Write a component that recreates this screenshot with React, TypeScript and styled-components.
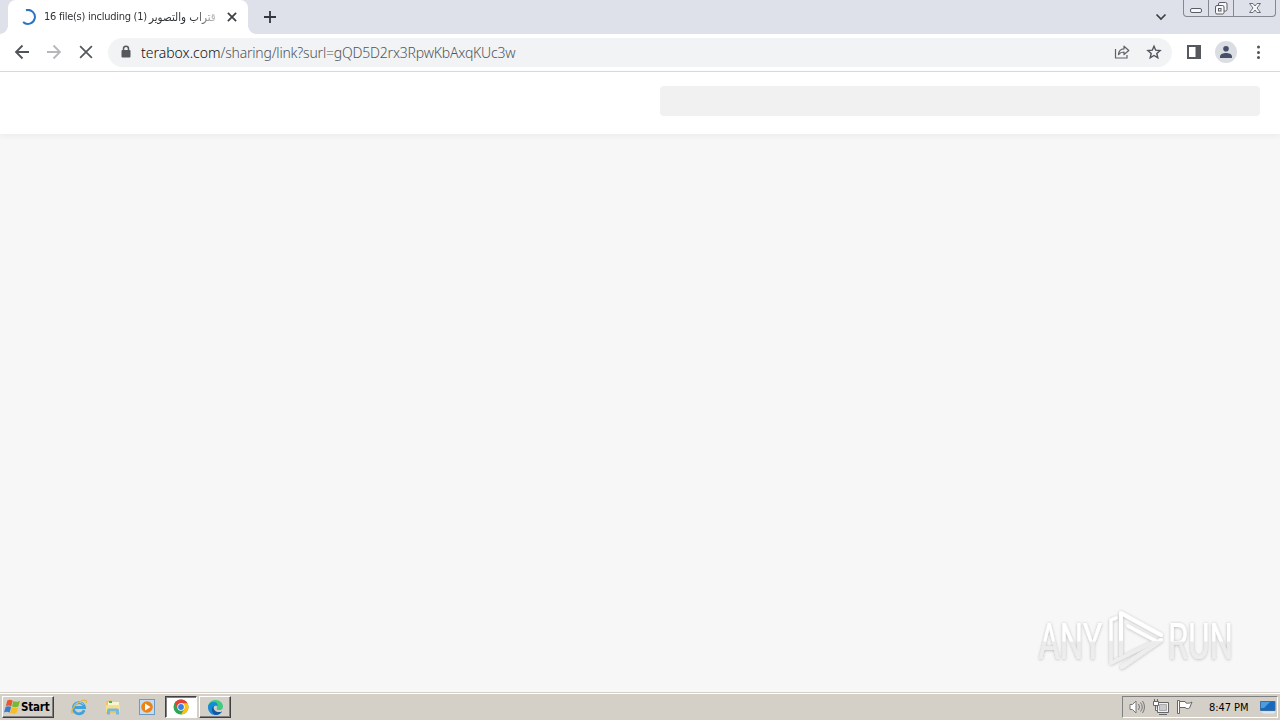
import styled, { createGlobalStyle } from "styled-components";

const GlobalStyle = createGlobalStyle`
  * {
    box-sizing: border-box;
  }
  body {
    margin: 0;
    overflow: hidden;
    background: #f7f7f7;
  }
  svg {
    display: block;
    flex: none;
  }
`;

const Screen = styled.div`
  display: flex;
  flex-direction: column;
  width: 1280px;
  height: 720px;
  font-family: "DejaVu Sans Condensed", "DejaVu Sans", sans-serif;
  color: #202124;
`;
const TabStrip = styled.div`
  display: flex;
  flex: none;
  height: 34px;
  padding-left: 8px;
  background: #dee1e9;
`;
const Tab = styled.div`
  position: relative;
  display: flex;
  align-items: center;
  width: 240px;
  padding: 0 8px 0 12px;
  background: white;
  border-radius: 8px 8px 0 0;
  &::before,
  &::after {
    content: "";
    position: absolute;
    bottom: 0;
    width: 8px;
    height: 8px;
  }
  &::before {
    left: -8px;
    background: radial-gradient(circle at 0 0, transparent 7.5px, white 8px);
  }
  &::after {
    right: -8px;
    background: radial-gradient(circle at 100% 0, transparent 7.5px, white 8px);
  }
`;
const TabTitle = styled.div`
  display: flex;
  width: 175px;
  margin: 0 6px 0 8px;
  overflow: hidden;
  white-space: pre;
  font-size: 11px;
  line-height: 18px;
  color: #303337;
  mask-image: linear-gradient(to right, black 150px, transparent 180px);
`;
const TitleText = styled.span`
  width: 105px;
  letter-spacing: -0.26px;
`;
const TitleArabic = styled.span`
  font-size: 11.5px;
`;
const StripSpacer = styled.div`
  flex: 1;
`;
const StripIcon = styled.div<{ $left: number; $right: number }>`
  padding: 9px ${(p) => p.$right}px 0 ${(p) => p.$left}px;
`;
const WindowButtons = styled.div`
  display: flex;
  width: 93px;
  height: 17px;
  margin-right: 4px;
  border: 1px solid #85888f;
  border-top: none;
  border-radius: 0 0 4px 4px;
`;
const WindowButton = styled.div<{ $width: number }>`
  display: flex;
  justify-content: center;
  width: ${(p) => p.$width}px;
  & + & {
    border-left: 1px solid #85888f;
  }
`;
const Toolbar = styled.div`
  display: flex;
  flex: none;
  align-items: center;
  height: 38px;
  padding: 0 12px 1px 12px;
  background: white;
  border-bottom: 1px solid #dadbdd;
`;
const NavButtons = styled.div`
  display: flex;
  gap: 12px;
  width: 96px;
`;
const AddressBar = styled.div`
  display: flex;
  align-items: center;
  width: 1064px;
  height: 29px;
  padding: 0 10px 0 12px;
  background: #f1f3f4;
  border-radius: 15px;
`;
const Url = styled.div`
  flex: 1;
  margin-left: 9px;
  padding-top: 1px;
  font-family: "Noto Sans", "Open Sans", sans-serif;
  font-size: 14px;
  font-weight: 300;
  line-height: 20px;
  letter-spacing: -0.2px;
  color: #50555a;
`;
const Domain = styled.span`
  color: #101114;
  letter-spacing: 0;
`;
const AddressIcons = styled.div`
  display: flex;
  gap: 16px;
`;
const ToolbarIcons = styled.div`
  display: flex;
  align-items: center;
  margin-left: 14px;
`;
const Avatar = styled.div`
  display: flex;
  align-items: center;
  justify-content: center;
  width: 22px;
  height: 22px;
  margin: 0 14px 0 13px;
  border-radius: 50%;
  background: #dadde2;
`;
const PageHeader = styled.header`
  display: flex;
  flex: none;
  justify-content: flex-end;
  height: 62px;
  padding: 14px 20px 0 0;
  background: white;
  box-shadow: 0 2px 6px rgba(0, 0, 0, 0.05);
  z-index: 1;
`;
const HeaderPlaceholder = styled.div`
  width: 600px;
  height: 30px;
  background: #f1f1f1;
  border-radius: 4px;
`;
const PageBody = styled.main`
  display: flex;
  flex: 1;
  align-items: flex-end;
  justify-content: flex-end;
  padding: 0 40px 16px 0;
  background: #f7f7f7;
`;
const Taskbar = styled.footer`
  display: flex;
  flex: none;
  align-items: center;
  height: 28px;
  padding: 1px 2px 0 2px;
  background: #d4d0c8;
  border-top: 1px solid #d4d0c8;
  box-shadow: inset 0 1px 0 white;
`;
const StartButton = styled.div`
  display: flex;
  align-items: center;
  width: 52px;
  height: 22px;
  padding-left: 1px;
  border: 1px solid;
  border-color: white #404040 #404040 white;
  box-shadow: inset -1px -1px 0 #808080;
  font-size: 11.5px;
  font-weight: bold;
  letter-spacing: -0.2px;
  color: black;
`;
const Launchers = styled.div`
  display: flex;
  gap: 16px;
  margin: 0 9px 0 16px;
`;
const TaskButton = styled.div<{ $active?: boolean }>`
  display: flex;
  align-items: center;
  justify-content: center;
  width: 32px;
  height: 22px;
  margin-right: 2px;
  border: 1px solid;
  border-color: ${(p) => (p.$active ? "#404040 white white #404040" : "white #404040 #404040 white")};
  background: ${(p) => (p.$active ? "white" : "#d4d0c8")};
  box-shadow: ${(p) => (p.$active ? "inset 1px 1px 0 #808080" : "inset -1px -1px 0 #808080")};
`;
const Tray = styled.div`
  display: flex;
  align-items: center;
  width: 156px;
  height: 22px;
  margin-left: auto;
  padding-left: 6px;
  border: 1px solid;
  border-color: #808080 white white #808080;
`;
const TrayIcons = styled.div`
  display: flex;
  gap: 8px;
  width: 80px;
`;
const Clock = styled.div`
  width: 50px;
  font-size: 11px;
  letter-spacing: -0.05px;
  white-space: nowrap;
  color: black;
`;

const Spinner = () => (
  <svg width="16" height="16" viewBox="0 0 16 16" fill="none">
    <path d="M6 1.2A7 7 0 1 1 3.1 13" stroke="#2a73c5" strokeWidth="2" />
  </svg>
);

const Cross = ({ size, color, width }: { size: number; color: string; width: number }) => (
  <svg width={size} height={size} viewBox="0 0 16 16" fill="none">
    <path d="M3.300 3.300l9.400 9.400M12.700 3.300l-9.400 9.400" stroke={color} strokeWidth={width} />
  </svg>
);

const Arrow = ({ color, flip }: { color: string; flip?: boolean }) => (
  <svg width="20" height="20" viewBox="0 0 20 20" fill="none">
    <path
      d="M17 10H4M10.5 3.5L4 10l6.500 6.500"
      transform={flip ? "rotate(180 10 10)" : undefined}
      stroke={color}
      strokeWidth="1.8"
    />
  </svg>
);

const Lock = () => (
  <svg width="12" height="14" viewBox="0 0 12 14" fill="none">
    <path d="M3.500 6V3.800a2.500 2.500 0 0 1 5 0V6" stroke="#55585d" strokeWidth="1.5" />
    <rect x="1.500" y="5" width="9" height="7.500" rx="1" fill="#55585d" />
  </svg>
);

const Share = () => (
  <svg width="16" height="16" viewBox="0 0 16 16" fill="none" stroke="#5f6368" strokeWidth="1.2">
    <path d="M1.500 5v9h11.500v-3" />
    <path d="M4.500 10.500C4.800 6.800 6.800 5 10 4.900V2.200L14.800 6.500 10 10.500V8C7.500 8 6 8.700 4.500 10.500z" strokeLinejoin="round" />
  </svg>
);

const Star = () => (
  <svg width="16" height="16" viewBox="0 0 16 16" fill="none">
    <path
      d="M8 2.200l1.700 4 4.400.4-3.300 2.900 1 4.300-3.800-2.300-3.800 2.300 1-4.300-3.300-2.900 4.400-.4z"
      stroke="#50545a"
      strokeWidth="1.400"
    />
  </svg>
);

const SidePanel = () => (
  <svg width="16" height="16" viewBox="0 0 16 16">
    <path d="M1 1h14v14H1zM3 3v10h6.500V3z" fill="#55585d" fillRule="evenodd" />
  </svg>
);

const Person = () => (
  <svg width="14" height="14" viewBox="0 0 14 14" fill="#455068">
    <circle cx="7" cy="3.800" r="2.800" />
    <path d="M1 13v-1.500C1 9 4.500 8 7 8s6 1 6 3.500V13z" />
  </svg>
);

const AnyRunLogo = () => (
  <svg width="204" height="70" viewBox="0 0 204 70" fill="none">
    <defs>
      <linearGradient id="mark" x1="0" y1="0" x2="0" y2="70" gradientUnits="userSpaceOnUse">
        <stop offset="0.490" stopColor="#ffffff" />
        <stop offset="0.510" stopColor="#ebebeb" />
        <stop offset="1" stopColor="#f1f1f1" />
      </linearGradient>
      {/* text is drawn from its own baseline origin, so the same stops are shifted up */}
      <linearGradient id="letters" href="#mark" y1="-52" y2="18" />
      <filter id="glow" x="-10%" y="-10%" width="120%" height="120%">
        <feDropShadow dx="0" dy="0.500" stdDeviation="1.700" floodColor="#000" floodOpacity="0.280" />
      </filter>
    </defs>
    <g filter="url(#glow)">
      <g fontFamily="Roboto, sans-serif" fontSize="50" fill="url(#letters)">
        <text transform="translate(2.500 52.500) scale(0.655 1)">ANY</text>
        <text transform="translate(132 52.500) scale(0.655 1)">RUN</text>
      </g>
      <g stroke="url(#mark)" strokeWidth="4" strokeLinecap="round" strokeLinejoin="round">
        <path d="M80 12l-5 2v43l45-22-28-15" strokeWidth="3.200" />
        <path d="M85 49V7l40 22" />
        <path d="M125 34L86 61" />
      </g>
    </g>
  </svg>
);

const WindowsFlag = () => (
  <svg width="17" height="18" viewBox="0 0 17 16">
    <path d="M3.300 1.500C5.500.3 7 .8 8.700 1.800L7.200 7.400C5.500 6.400 4 6.200 1.800 7.200z" fill="#e9572b" />
    <path d="M9.300 2c2 1 4.200 1 6.700 0l-1.700 5.600c-2 1-4.300.8-6.300-.1z" fill="#75b936" />
    <path d="M1.600 7.900c2-.9 3.800-.7 5.500.2l-1.500 5.700C4 12.600 2.200 12.400 0 13.500z" fill="#3a7cc9" />
    <path d="M7.700 8.300c2 1 4.300 1 6.400.2l-1.600 5.500c-2 1-4.300.8-6.300-.1z" fill="#f6bd25" />
  </svg>
);

const InternetExplorer = () => (
  <svg width="18" height="18" viewBox="0 0 18 18" fill="none">
    <path d="M14.200 12.200A5.600 5.600 0 1 1 14.500 9.500H5" stroke="#3fa2dc" strokeWidth="2.800" />
    <path d="M4 8A5.500 5.500 0 0 1 13.500 6.500" stroke="#9bdcf6" strokeWidth="1" />
    <path d="M2.800 15.500C-.5 14 4 6.500 10.500 3.500c4.500-2.300 7-1.500 5.500 1.500" stroke="#e2b743" strokeWidth="1.300" />
  </svg>
);

const Explorer = () => (
  <svg width="18" height="18" viewBox="0 0 18 18">
    <path d="M2 3l5-1 1 2h7v11H2z" fill="#e5c767" />
    <path d="M4 4h11v5H4z" fill="#fbf5cf" />
    <path d="M5 3h3v2H5z" fill="#4bad68" />
    <path d="M2 7h14v7H2z" fill="#f5df8c" />
    <path d="M3 16.500v-4q0-2 2-2h8q2 0 2 2v4h-3v-3H6v3z" fill="#72b8df" />
  </svg>
);

const MediaPlayer = () => (
  <svg width="18" height="18" viewBox="0 0 18 18">
    <rect x="1.500" y="1.500" width="15" height="15" fill="#c4ddf0" stroke="#6b9ac4" />
    <circle cx="9" cy="9" r="5.800" fill="#ee8216" />
    <path d="M7 5.500L12.500 9 7 12.500z" fill="white" />
  </svg>
);

const Chrome = () => (
  <svg width="16" height="16" viewBox="0 0 16 16">
    <circle cx="8" cy="8" r="7.500" fill="#2fa452" />
    <path d="M1.500 4.250A7.500 7.500 0 0 1 14.500 4.250H8L4.750 9.900z" fill="#e24334" />
    <path d="M14.500 4.250A7.500 7.500 0 0 1 8 15.500l3.250-5.600L8 4.250z" fill="#fbc116" />
    <circle cx="8" cy="8" r="3.700" fill="white" />
    <circle cx="8" cy="8" r="2.900" fill="#3c7de5" />
  </svg>
);

const Edge = () => (
  <svg width="17" height="17" viewBox="0 0 17 17">
    <path d="M1 8C1.500 3.500 4.500 1 8.500 1 13 1 16 4 16 7.500c0 3-2.500 4-5 3.500-2-.5-1-2-1-3C10 5 3 4 1 8z" fill="#43c982" />
    <path d="M1 8c0-3 3-5 6-5 2.500 0 4 2 3.500 4C7 6 5 9 7 12c2 2.500 5 2.500 8 .5C13.500 15 11 16 8.500 16 4 16 1 12.500 1 8z" fill="#148bd5" />
    <path d="M6.500 7C3.500 9 5 15 8.500 16c3 0 5-1.200 6.500-3.500-4 1.500-9 0-8.500-5.500z" fill="#1557a2" />
  </svg>
);

const Speaker = () => (
  <svg width="16" height="16" viewBox="0 0 16 16" fill="none" stroke="#77767a">
    <path d="M1 5.500h2.500L7 2v12l-3.500-3.500H1z" fill="white" />
    <path d="M9.500 5q2 3 0 6M11.500 3.500q3.500 4.500 0 9M13.500 2q4 6 0 12" />
  </svg>
);

const Network = () => (
  <svg width="16" height="16" viewBox="0 0 16 16" fill="none" stroke="#66666a">
    <path d="M4.500 3.500h11v10h-11zM6 15.500h8" fill="#f2f2f2" />
    <path d="M6.500 5.500h7v6h-7z" fill="#c9c9c9" stroke="#aaaaaa" />
    <path d="M.500 2.500h5v4h-5zM1.500 0v2.500M4.500 0v2.500M2.500 6.500v5H4.500" fill="white" />
  </svg>
);

const ActionFlag = () => (
  <svg width="16" height="16" viewBox="0 0 16 16" fill="none" stroke="#66666a">
    <path d="M.500 1.500h2v13h-2z" fill="white" />
    <path d="M2.500 2.500h5.500l1 1.500c2 .5 3.500.300 6-1L12.500 9c-1.500 1-3 .8-4.500-.5H2.500z" fill="white" />
  </svg>
);

const Desktop = () => (
  <svg width="17" height="14" viewBox="0 0 17 14">
    <path d="M1.500 1.500h14.500v9H1.500z" fill="#1769bd" stroke="#3c6ea3" />
    <path d="M2 2h9L5 8H2z" fill="#4e9ce0" />
    <path d="M1 11.500h15.500L15 13.500H5z" fill="#dbe7f2" />
  </svg>
);

export default function App() {
  return (
    <Screen>
      <GlobalStyle />
      <TabStrip>
        <Tab>
          <Spinner />
          <TabTitle>
            <TitleText>16 file(s) including (1) </TitleText>
            <TitleArabic>قتراب والتصوير</TitleArabic>
          </TabTitle>
          <Cross size={14} color="#3c4043" width={2} />
        </Tab>
        <StripIcon $left={14} $right={0}>
          <svg width="16" height="16" viewBox="0 0 16 16">
            <path d="M8 2v12M2 8h12" stroke="#34373d" strokeWidth="1.800" />
          </svg>
        </StripIcon>
        <StripSpacer />
        <StripIcon $left={0} $right={14}>
          <svg width="16" height="16" viewBox="0 0 16 16" fill="none">
            <path d="M3.500 5.500L8 10l4.500-4.500" stroke="#3c4043" strokeWidth="1.700" />
          </svg>
        </StripIcon>
        <WindowButtons>
          <WindowButton $width={24}>
            <svg width="14" height="16" viewBox="0 0 14 16">
              <rect x="1.500" y="8.500" width="11" height="4" rx="1.500" fill="#f6f7f9" stroke="#5a5d64" />
            </svg>
          </WindowButton>
          <WindowButton $width={25}>
            <svg width="14" height="16" viewBox="0 0 14 16" fill="#f6f7f9" stroke="#5a5d64">
              <rect x="4.500" y="2.500" width="8.500" height="8.500" rx="1.500" />
              <rect x="1.500" y="5.500" width="8.500" height="8.500" rx="1.500" />
              <rect x="4.500" y="8.500" width="2.500" height="2.500" />
            </svg>
          </WindowButton>
          <WindowButton $width={42}>
            <svg width="14" height="16" viewBox="0 0 14 16" fill="#f6f7f9" stroke="#6b6e75">
              <path d="M1.500 3.500H5l2 2.500 2-2.500h3.500L9 8l3.500 4.500H9L7 10l-2 2.500H1.500L5 8z" />
            </svg>
          </WindowButton>
        </WindowButtons>
      </TabStrip>
      <Toolbar>
        <NavButtons>
          <Arrow color="#505358" />
          <Arrow color="#b5b7ba" flip />
          <Cross size={20} color="#55585d" width={1.4} />
        </NavButtons>
        <AddressBar>
          <Lock />
          <Url>
            <Domain>terabox.com</Domain>/sharing/link?surl=gQD5D2rx3RpwKbAxqKUc3w
          </Url>
          <AddressIcons>
            <Share />
            <Star />
          </AddressIcons>
        </AddressBar>
        <ToolbarIcons>
          <SidePanel />
          <Avatar>
            <Person />
          </Avatar>
          <svg width="16" height="16" viewBox="0 0 16 16" fill="#505358">
            <circle cx="7.500" cy="3" r="1.500" />
            <circle cx="7.500" cy="8.500" r="1.500" />
            <circle cx="7.500" cy="13.500" r="1.500" />
          </svg>
        </ToolbarIcons>
      </Toolbar>
      <PageHeader>
        <HeaderPlaceholder />
      </PageHeader>
      <PageBody>
        <AnyRunLogo />
      </PageBody>
      <Taskbar>
        <StartButton>
          <WindowsFlag />
          Start
        </StartButton>
        <Launchers>
          <InternetExplorer />
          <Explorer />
          <MediaPlayer />
        </Launchers>
        <TaskButton $active>
          <Chrome />
        </TaskButton>
        <TaskButton>
          <Edge />
        </TaskButton>
        <Tray>
          <TrayIcons>
            <Speaker />
            <Network />
            <ActionFlag />
          </TrayIcons>
          <Clock>8:47 PM</Clock>
          <Desktop />
        </Tray>
      </Taskbar>
    </Screen>
  );
}
